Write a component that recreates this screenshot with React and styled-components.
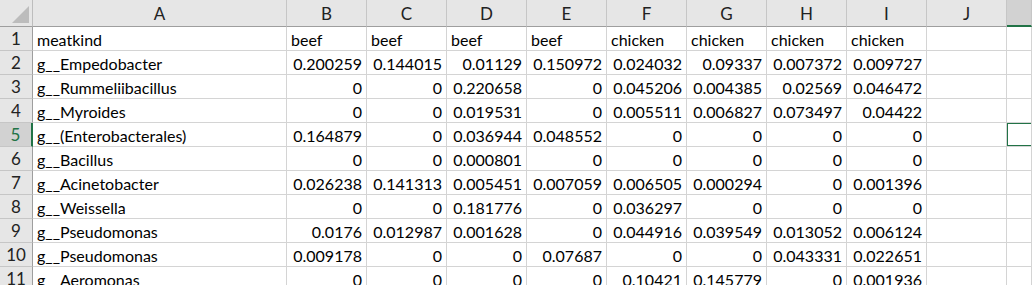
import React from "react";
import styled, { createGlobalStyle } from "styled-components";

const Global = createGlobalStyle`
  html, body { margin: 0; padding: 0; background: #fff; overflow: hidden; }
  body { font-family: Lato, "Liberation Sans", sans-serif; }
`;

const GREEN = "#217346";

const Sheet = styled.div`
  display: grid;
  grid-template-columns: 33px 254px repeat(9, 80px) 1fr;
  grid-auto-rows: 24px;
  grid-template-rows: 27px;
  width: 1032px;
  height: 285px;
  overflow: hidden;
  font-size: 16px;
  color: #000;
`;

const Corner = styled.div`
  position: relative;
  background: #e6e6e6;
  border-right: 1px solid #bdbdbd;
  border-bottom: 1px solid #9e9e9e;
  &::after {
    content: "";
    position: absolute;
    right: 3px;
    bottom: 3px;
    width: 0;
    height: 0;
    border-left: 17px solid transparent;
    border-bottom: 17px solid #bcbcbc;
  }
`;

const ColHead = styled.div`
  background: ${(p) => (p.$sel ? "#d2d2d2" : "#e6e6e6")};
  border-right: 1px solid #c6c6c6;
  border-bottom: ${(p) => (p.$sel ? `2px solid ${GREEN}` : "1px solid #9e9e9e")};
  display: flex;
  align-items: center;
  justify-content: center;
  color: #222;
  font-size: 17px;
  padding-top: 1px;
`;

const RowHead = styled.div`
  background: ${(p) => (p.$sel ? "#d2d2d2" : "#e6e6e6")};
  color: ${(p) => (p.$sel ? GREEN : "#222")};
  border-bottom: 1px solid #c6c6c6;
  border-right: ${(p) => (p.$sel ? `2px solid ${GREEN}` : "1px solid #9e9e9e")};
  display: flex;
  align-items: center;
  justify-content: center;
  font-size: 17px;
`;

const Cell = styled.div`
  border-right: 1px solid #d4d4d4;
  border-bottom: 1px solid #d4d4d4;
  display: flex;
  align-items: center;
  justify-content: ${(p) => (p.$num ? "flex-end" : "flex-start")};
  padding: 1px 4px 0 4px;
  white-space: nowrap;
  overflow: hidden;
  position: relative;
`;

const Selection = styled.div`
  position: absolute;
  left: -1px;
  top: -1px;
  right: -3px;
  bottom: -1px;
  border: 2px solid ${GREEN};
  pointer-events: none;
`;

const cols = ["A", "B", "C", "D", "E", "F", "G", "H", "I", "J", ""];

const rows = [
  ["meatkind", "beef", "beef", "beef", "beef", "chicken", "chicken", "chicken", "chicken"],
  ["g__Empedobacter", 0.200259, 0.144015, 0.01129, 0.150972, 0.024032, 0.09337, 0.007372, 0.009727],
  ["g__Rummeliibacillus", 0, 0, 0.220658, 0, 0.045206, 0.004385, 0.02569, 0.046472],
  ["g__Myroides", 0, 0, 0.019531, 0, 0.005511, 0.006827, 0.073497, 0.04422],
  ["g__(Enterobacterales)", 0.164879, 0, 0.036944, 0.048552, 0, 0, 0, 0],
  ["g__Bacillus", 0, 0, 0.000801, 0, 0, 0, 0, 0],
  ["g__Acinetobacter", 0.026238, 0.141313, 0.005451, 0.007059, 0.006505, 0.000294, 0, 0.001396],
  ["g__Weissella", 0, 0, 0.181776, 0, 0.036297, 0, 0, 0],
  ["g__Pseudomonas", 0.0176, 0.012987, 0.001628, 0, 0.044916, 0.039549, 0.013052, 0.006124],
  ["g__Pseudomonas", 0.009178, 0, 0, 0.07687, 0, 0, 0.043331, 0.022651],
  ["g__Aeromonas", 0, 0, 0, 0, 0.10421, 0.145779, 0, 0.001936],
];

export default function App() {
  return (
    <>
      <Global />
      <Sheet>
        <Corner />
        {cols.map((c, i) => (
          <ColHead key={i} $sel={i === cols.length - 1}>
            {c}
          </ColHead>
        ))}
        {rows.map((r, ri) => {
          const sel = ri === 4;
          return (
            <React.Fragment key={ri}>
              <RowHead $sel={sel}>{ri + 1}</RowHead>
              {r.map((v, ci) => (
                <Cell key={ci} $num={typeof v === "number"}>
                  {String(v)}
                </Cell>
              ))}
              <Cell />
              <Cell>{sel && <Selection />}</Cell>
            </React.Fragment>
          );
        })}
      </Sheet>
    </>
  );
}
